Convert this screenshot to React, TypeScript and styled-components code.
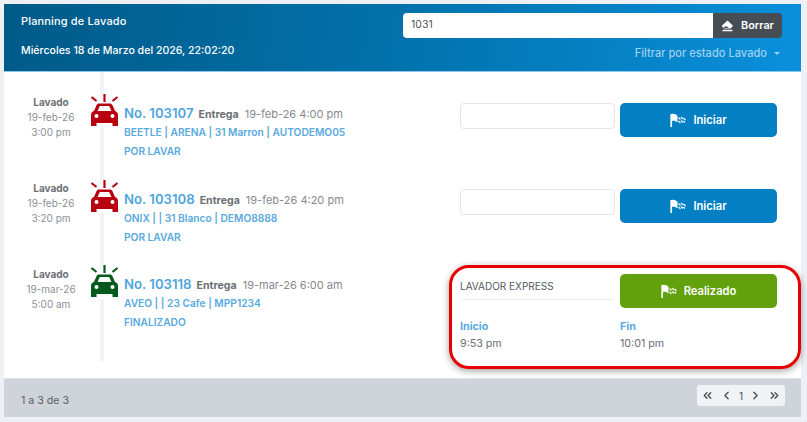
import React from "react";
import styled, { createGlobalStyle } from "styled-components";
import { ChevronsLeft, ChevronLeft, ChevronRight, ChevronsRight } from "lucide-react";

const Global = createGlobalStyle`
  html, body { margin: 0; padding: 0; background: #eef0f5; }
  body { font-family: Inter, "Noto Sans", "Liberation Sans", sans-serif; }
  * { box-sizing: border-box; }
`;

const Page = styled.div`
  width: 807px;
  height: 422px;
  padding: 4px 6px 5px 4px;
`;
const Panel = styled.div`
  height: 413px;
  background: #fff;
  display: flex;
  flex-direction: column;
`;
const Header = styled.header`
  height: 68px;
  flex: none;
  background: linear-gradient(100deg, #005a88 0%, #0272ac 50%, #0a90dc 100%);
  border-bottom: 1px solid #8cc6ea;
  display: flex;
  justify-content: space-between;
  padding: 9px 19px 0 17px;
  color: #fff;
`;
const HeaderLeft = styled.div`
  display: flex;
  flex-direction: column;
  gap: 14px;
  padding-top: 1px;
  font-size: 10.6px;
  font-weight: 500;
  line-height: 15px;
`;
const PageTitle = styled.div`
  font-size: 11px;
  letter-spacing: 0.15px;
`;
const HeaderRight = styled.div`
  width: 379px;
  display: flex;
  flex-direction: column;
  align-items: flex-end;
`;
const SearchGroup = styled.div`
  width: 100%;
  height: 25px;
  display: flex;
`;
const SearchInput = styled.div`
  flex: 1;
  background: #fff;
  border-radius: 4px 0 0 4px;
  color: #555;
  font-size: 10.5px;
  line-height: 24px;
  padding-left: 8px;
`;
const ClearButton = styled.div`
  width: 69px;
  background: #474d55;
  border-radius: 0 4px 4px 0;
  display: flex;
  align-items: center;
  justify-content: center;
  gap: 7px;
  font-size: 10.8px;
  font-weight: 600;
`;
const FilterToggle = styled.div`
  margin-top: 8px;
  padding-right: 2px;
  display: flex;
  align-items: center;
  gap: 7px;
  font-size: 11.1px;
  font-weight: 500;
  color: #9ed0f0;
  line-height: 15px;
`;
const Caret = styled.span`
  width: 0;
  height: 0;
  border-left: 3px solid transparent;
  border-right: 3px solid transparent;
  border-top: 3px solid #9ed0f0;
`;
const Body = styled.main`
  flex: 1;
  display: flex;
  flex-direction: column;
`;
const Row = styled.div<{ $h: number }>`
  height: ${(p) => p.$h}px;
  display: flex;
`;
const TimeCol = styled.div<{ $top: number }>`
  width: 96px;
  flex: none;
  padding: ${(p) => p.$top}px 2px 0 0;
  text-align: center;
  font-size: 10px;
  line-height: 14.8px;
  color: #8b8f94;
`;
const TimeLabel = styled.div`
  font-weight: 700;
  color: #6c7075;
`;
const MainCol = styled.div<{ $top: number }>`
  flex: 1;
  border-left: 4px solid #f2f3f5;
  display: flex;
  padding-top: ${(p) => p.$top}px;
`;
const CarIcon = styled.div<{ $color: string }>`
  margin-left: -15px;
  width: 30px;
  height: 34px;
  flex: none;
  color: ${(p) => p.$color};
  background: #fff;
  align-self: flex-start;
`;
const Info = styled.div`
  margin-left: 5px;
  width: 336px;
  flex: none;
  padding-top: 11px;
`;
const TitleLine = styled.div`
  display: flex;
  align-items: baseline;
  white-space: nowrap;
  line-height: 17px;
`;
const OrderNo = styled.span`
  font-size: 13.2px;
  font-weight: 600;
  color: #4ea5dc;
  margin-right: 5px;
`;
const DeliveryLabel = styled.span`
  font-size: 10.6px;
  font-weight: 700;
  color: #6c7075;
  margin-right: 6px;
`;
const DeliveryDate = styled.span`
  font-size: 11px;
  color: #85898e;
`;
const InfoLine = styled.div`
  font-size: 10.2px;
  font-weight: 600;
  color: #58a9de;
  line-height: 19px;
`;
const Actions = styled.div`
  position: relative;
  width: 317px;
  flex: none;
  padding-top: 9px;
`;
const ActionTop = styled.div`
  display: grid;
  grid-template-columns: 155px 157px;
  gap: 5px;
  align-items: start;
`;
const WorkerInput = styled.div<{ $filled?: boolean }>`
  height: 26px;
  background: #fff;
  border: 1px solid ${(p) => (p.$filled ? "transparent" : "#e3e6ef")};
  border-bottom-color: ${(p) => (p.$filled ? "#eceef3" : "#e3e6ef")};
  border-radius: 4px;
  font-size: 10px;
  line-height: 22px;
  text-indent: -1px;
  color: #55595e;
  white-space: nowrap;
`;
const ActionButton = styled.div<{ $bg: string }>`
  height: 34px;
  background: ${(p) => p.$bg};
  color: #fff;
  border-radius: 5px;
  display: flex;
  align-items: center;
  justify-content: center;
  gap: 7px;
  font-size: 11.2px;
  font-weight: 600;
`;
const TimesGrid = styled.div`
  margin-top: 10px;
  display: grid;
  grid-template-columns: 155px 157px;
  gap: 5px;
`;
const TimeTitle = styled.div`
  font-size: 10.7px;
  font-weight: 700;
  color: #58a9de;
  line-height: 17px;
`;
const TimeValue = styled.div`
  font-size: 10.7px;
  color: #6c7075;
  line-height: 17px;
`;
const Highlight = styled.div`
  position: absolute;
  left: -11px;
  top: 0;
  width: 352px;
  height: 104px;
  border: 3px solid #e60000;
  border-radius: 20px;
  box-shadow: 0 2px 7px rgba(0, 0, 0, 0.38);
  pointer-events: none;
`;
const Footer = styled.footer`
  height: 39px;
  flex: none;
  background: #cfd3da;
  border-top: 1px solid #dfe2e7;
  display: flex;
  align-items: center;
  justify-content: space-between;
  padding: 0 16px 0 17px;
  font-size: 10.6px;
  color: #5c6066;
`;
const FooterCount = styled.span`
  padding-top: 4px;
`;
const Pager = styled.div`
  width: 88px;
  height: 21px;
  margin-bottom: 5px;
  background: #f0f2f6;
  border-radius: 3px;
  display: flex;
  align-items: center;
  justify-content: space-between;
  padding: 0 4px;
  font-size: 10px;
  color: #4b4f55;
`;

function CarGlyph({ color }: { color: string }) {
  return (
    <CarIcon $color={color}>
      <svg width="30" height="34" viewBox="0 0 30 34" fill="none">
        <path d="M15.5 0v8M2.5 3l5 4M28.5 3l-5 4" stroke="currentColor" strokeWidth="2.2" />
        <path
          fillRule="evenodd"
          fill="currentColor"
          d="M10 9.5h11c1 0 2 .6 2.4 1.6L26 17c1.8.6 3 2 3 4v11h-5.5v-3h-16v3H2V21c0-2 1.2-3.4 3-4l2.6-5.9C8 10.1 9 9.5 10 9.5zM10.8 12l-2.2 5h13.8l-2.2-5zM7.5 20a2 2 0 1 0 0 4 2 2 0 0 0 0-4zM23.5 20a2 2 0 1 0 0 4 2 2 0 0 0 0-4z"
        />
      </svg>
    </CarIcon>
  );
}

function Flag() {
  return (
    <svg width="16" height="14" viewBox="0 0 16 14" fill="none">
      <path d="M1.2 1v13" stroke="#fff" strokeWidth="1.7" />
      <path d="M2 1C4 .5 6 1.500 7.500 3v6.500C6 8 4 7.500 2 8z" fill="#fff" />
      <path
        d="M8.500 4.500l2 2M11 4l2 2M13.500 5l2 2M8.500 8l2 2M11 7.500l2 2M13.500 8l1.500 1.500"
        stroke="#fff"
        strokeWidth="1.4"
        opacity="0.9"
      />
    </svg>
  );
}

function Eraser() {
  return (
    <svg width="13" height="12" viewBox="0 0 13 12" fill="none">
      <path
        fillRule="evenodd"
        fill="#fff"
        d="M6.500 0.500L12 5.800 9.600 8.600H3.200L0.600 6zM4 6.400c-.9 0-1.400.5-1 1 .4.5 1.500.6 2.500.6s2-.2 2-.7-1-.9-3.500-.9z"
      />
      <path d="M1.500 10.500h10" stroke="#fff" strokeWidth="1.500" />
    </svg>
  );
}

const rows = [
  {
    h: 98, timeTop: 23, top: 22, date: "19-feb-26", hour: "3:00 pm", no: "No. 103107",
    del: "19-feb-26 4:00 pm", line: "BEETLE | ARENA | 31 Marron | AUTODEMO05", st: "POR LAVAR",
  },
  {
    h: 85, timeTop: 11, top: 10, date: "19-feb-26", hour: "3:20 pm", no: "No. 103108",
    del: "19-feb-26 4:20 pm", line: "ONIX | | 31 Blanco | DEMO8888", st: "POR LAVAR",
  },
];

export default function App() {
  return (
    <Page>
      <Global />
      <Panel>
        <Header>
          <HeaderLeft>
            <PageTitle>Planning de Lavado</PageTitle>
            <div>Miércoles 18 de Marzo del 2026, 22:02:20</div>
          </HeaderLeft>
          <HeaderRight>
            <SearchGroup>
              <SearchInput>1031</SearchInput>
              <ClearButton>
                <Eraser />
                Borrar
              </ClearButton>
            </SearchGroup>
            <FilterToggle>
              Filtrar por estado Lavado
              <Caret />
            </FilterToggle>
          </HeaderRight>
        </Header>
        <Body>
          {rows.map((r) => (
            <Row key={r.no} $h={r.h}>
              <TimeCol $top={r.timeTop}>
                <TimeLabel>Lavado</TimeLabel>
                <div>{r.date}</div>
                <div>{r.hour}</div>
              </TimeCol>
              <MainCol $top={r.top}>
                <CarGlyph color="#b80010" />
                <Info>
                  <TitleLine>
                    <OrderNo>{r.no}</OrderNo>
                    <DeliveryLabel>Entrega</DeliveryLabel>
                    <DeliveryDate>{r.del}</DeliveryDate>
                  </TitleLine>
                  <InfoLine>{r.line}</InfoLine>
                  <InfoLine>{r.st}</InfoLine>
                </Info>
                <Actions>
                  <ActionTop>
                    <WorkerInput />
                    <ActionButton $bg="#0380c4">
                      <Flag />
                      Iniciar
                    </ActionButton>
                  </ActionTop>
                </Actions>
              </MainCol>
            </Row>
          ))}
          <Row $h={106}>
            <TimeCol $top={12}>
              <TimeLabel>Lavado</TimeLabel>
              <div>19-mar-26</div>
              <div>5:00 am</div>
            </TimeCol>
            <MainCol $top={10}>
              <CarGlyph color="#04591c" />
              <Info>
                <TitleLine>
                  <OrderNo>No. 103118</OrderNo>
                  <DeliveryLabel>Entrega</DeliveryLabel>
                  <DeliveryDate>19-mar-26 6:00 am</DeliveryDate>
                </TitleLine>
                <InfoLine>AVEO | | 23 Cafe | MPP1234</InfoLine>
                <InfoLine>FINALIZADO</InfoLine>
              </Info>
              <Actions>
                <ActionTop>
                  <WorkerInput $filled>LAVADOR EXPRESS</WorkerInput>
                  <ActionButton $bg="#63a10c">
                    <Flag />
                    Realizado
                  </ActionButton>
                </ActionTop>
                <TimesGrid>
                  <div>
                    <TimeTitle>Inicio</TimeTitle>
                    <TimeValue>9:53 pm</TimeValue>
                  </div>
                  <div>
                    <TimeTitle>Fin</TimeTitle>
                    <TimeValue>10:01 pm</TimeValue>
                  </div>
                </TimesGrid>
                <Highlight />
              </Actions>
            </MainCol>
          </Row>
        </Body>
        <Footer>
          <FooterCount>1 a 3 de 3</FooterCount>
          <Pager>
            <ChevronsLeft size={13} strokeWidth={2.5} />
            <ChevronLeft size={13} strokeWidth={2.5} />
            <span>1</span>
            <ChevronRight size={13} strokeWidth={2.5} />
            <ChevronsRight size={13} strokeWidth={2.5} />
          </Pager>
        </Footer>
      </Panel>
    </Page>
  );
}
